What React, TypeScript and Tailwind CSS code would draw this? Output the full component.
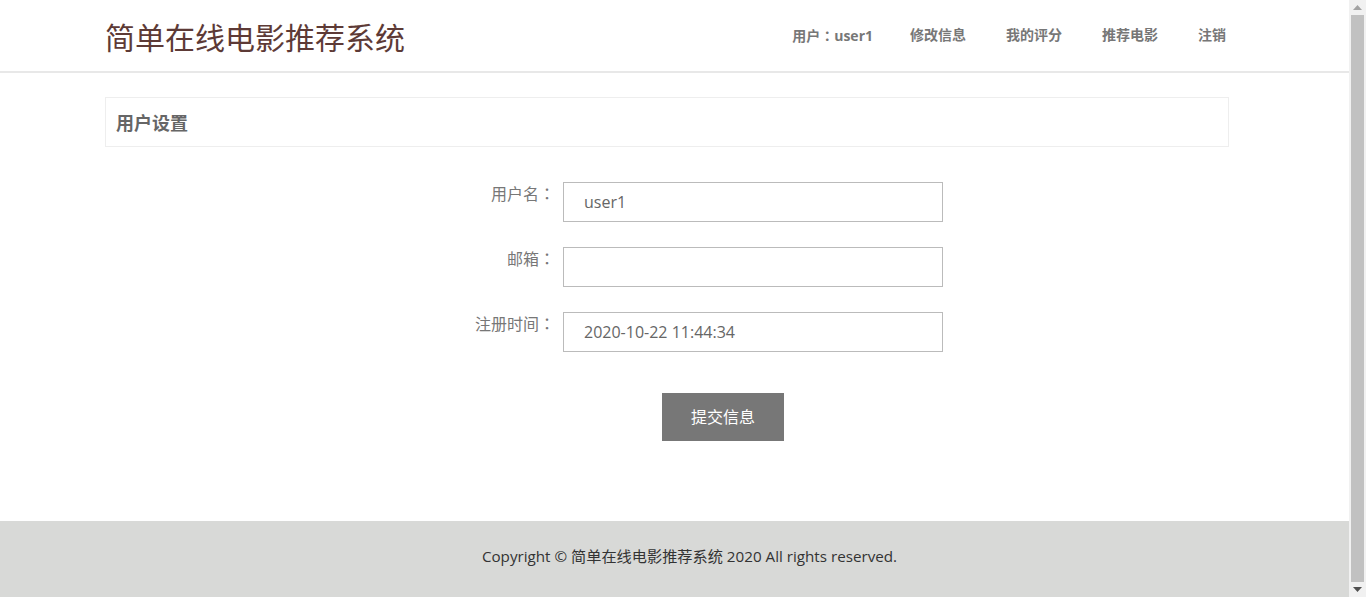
import React from 'react';

const FONT = '"Open Sans", "Noto Sans CJK SC", sans-serif';
const COLON_FONT = '"Noto Sans CJK JP", sans-serif';

const navItems = ['修改信息', '我的评分', '推荐电影', '注销'];

const fields = [
    { label: '用户名', value: 'user1' },
    { label: '邮箱', value: '' },
    { label: '注册时间', value: '2020-10-22 11:44:34' },
];

const Colon: React.FC = () => <span style={{ fontFamily: COLON_FONT }}>：</span>;

const Header: React.FC = () => (
    <header className="h-[73px] border-b-2 border-[#e8e8e8] bg-white">
        <div className="ml-[105px] mr-[123px] flex h-full items-start justify-between">
            <h1 className="mt-[18px] text-[30px] leading-[40px] font-normal text-[#5d3a36]">简单在线电影推荐系统</h1>
            <nav className="mt-[25px] flex gap-[40px] text-[14px] font-bold leading-[20px] text-[#777]">
                <span className="-mr-[3px]">用户<Colon />user1</span>
                {navItems.map((item) => (
                    <span key={item}>{item}</span>
                ))}
            </nav>
        </div>
    </header>
);

const FormRow: React.FC<{ label: string; value: string }> = ({ label, value }) => (
    <div className="flex items-start">
        <label className="w-[563px] pr-[8px] text-right text-[16px] leading-[22px] text-[#777]">
            {label}<Colon />
        </label>
        <input
            readOnly
            value={value}
            className="h-[40px] w-[380px] border border-[#bbb] bg-white pl-[20px] text-[16px] text-[#666] outline-none"
            style={{ fontFamily: FONT }}
        />
    </div>
);

export default function App() {
    return (
        <div className="flex h-[597px] w-full overflow-hidden bg-white" style={{ fontFamily: FONT }}>
            <div className="flex flex-1 flex-col">
                <Header />
                <main className="flex-1">
                    <div className="ml-[105px] mr-[120px] mt-[24px] flex h-[50px] items-center border border-[#eee] px-[10px] pt-[2px]">
                        <h2 className="text-[18px] font-bold text-[#666]">用户设置</h2>
                    </div>
                    <div className="mt-[35px] flex flex-col gap-[25px]">
                        {fields.map((f) => (
                            <FormRow key={f.label} label={f.label} value={f.value} />
                        ))}
                    </div>
                    <div className="mt-[41px] flex pl-[662px]">
                        <button className="h-[48px] w-[122px] bg-[#777] text-[16px] text-white">提交信息</button>
                    </div>
                </main>
                <footer className="flex h-[76px] items-center justify-center bg-[#d8d9d7] pl-[30px] pb-[5px] text-[15.2px] text-[#333]">
                    Copyright © 简单在线电影推荐系统 2020 All rights reserved.
                </footer>
            </div>
            {/* fake scrollbar */}
            <div className="flex w-[17px] flex-col items-center bg-[#f1f1f1]">
                <div className="flex h-[15px] items-center justify-center">
                    <svg width="9" height="5" viewBox="0 0 9 5"><path d="M0 5 L4.5 0 L9 5Z" fill="#a3a3a3" /></svg>
                </div>
                <div className="w-[13px] flex-1 bg-[#c1c1c1]" />
                <div className="flex h-[15px] items-center justify-center">
                    <svg width="9" height="5" viewBox="0 0 9 5"><path d="M0 0 L4.5 5 L9 0Z" fill="#505050" /></svg>
                </div>
            </div>
        </div>
    );
}
